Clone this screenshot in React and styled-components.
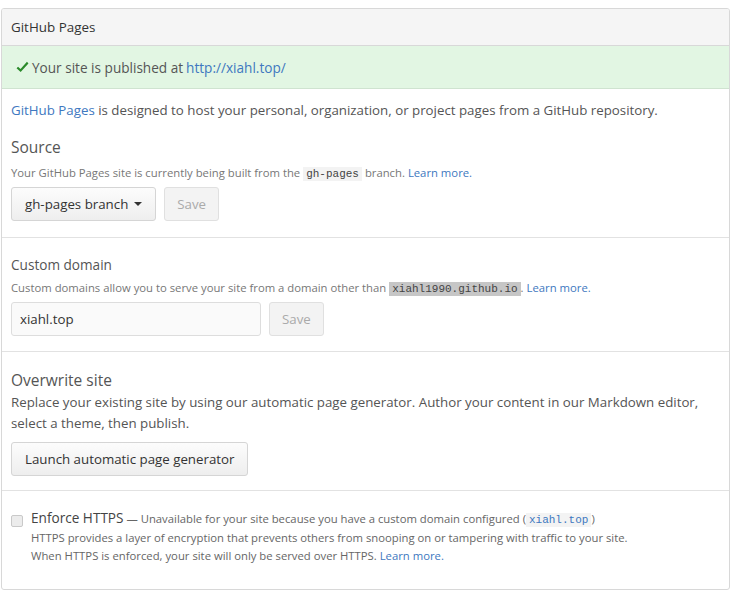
import React from "react";
import styled, { createGlobalStyle } from "styled-components";

const Global = createGlobalStyle`
  body {
    margin: 0;
    background: #fff;
    font-family: "Open Sans", "Noto Sans", sans-serif;
    color: #333;
  }
`;

const Page = styled.div`
  padding: 8px 4px 0 1px;
`;

const Panel = styled.div`
  border: 1px solid #d8d8d8;
  border-radius: 3px;
  width: 729px;
  box-sizing: border-box;
  overflow: hidden;
`;

const Header = styled.div`
  background: #f5f5f5;
  height: 36px;
  display: flex;
  align-items: center;
  padding: 0 9px;
  font-size: 13.4px;
  color: #333;
  border-bottom: 1px solid #d8d8d8;
`;

const Flash = styled.div`
  background: #e2f6e3;
  height: 42px;
  display: flex;
  align-items: center;
  padding: 0 12px 0 14px;
  font-size: 13.6px;
  color: #555;
  border-bottom: 1px solid #cfe3d0;
  gap: 3px;
`;

const Link = styled.a`
  color: #4078c0;
  text-decoration: none;
`;

const Section = styled.div`
  padding: ${(p) => p.$pad || "12px 9px 16px"};
  border-top: ${(p) => (p.$first ? "none" : "1px solid #e2e2e2")};
`;

const Lead = styled.p`
  margin: 0 0 17px;
  font-size: 13.3px;
  color: #555;
`;

const Title = styled.h3`
  margin: 0 0 ${(p) => p.$gap || 4}px;
  font-weight: 400;
  font-size: ${(p) => p.$size || 15.5}px;
  color: #555;
`;

const Note = styled.p`
  margin: 0 0 ${(p) => p.$gap || 7}px;
  font-size: 11.3px;
  color: #777;
`;

const Code = styled.code`
  font-family: "Liberation Mono", monospace;
  font-size: 11px;
  padding: 1px 3px;
  background: ${(p) => (p.$sel ? "#c6c6c6" : "#f3f3f3")};
  color: ${(p) => (p.$blue ? "#4078c0" : "#444")};
`;

const Row = styled.div`
  display: flex;
  align-items: center;
  gap: 8px;
`;

const Button = styled.button`
  font-family: inherit;
  font-size: 13.3px;
  height: 34px;
  padding: 0 ${(p) => (p.disabled ? 12 : 13)}px;
  border: 1px solid #d5d5d5;
  border-radius: 3px;
  background: linear-gradient(#fcfcfc, #eee);
  color: ${(p) => (p.disabled ? "#aaa" : "#333")};
  display: flex;
  align-items: center;
  gap: 6px;
  ${(p) => p.disabled && "background: #f3f3f3; border-color: #e0e0e0;"}
`;

const Caret = styled.span`
  width: 0;
  height: 0;
  border-left: 4px solid transparent;
  border-right: 4px solid transparent;
  border-top: 4px solid #333;
`;

const Input = styled.input`
  font-family: inherit;
  font-size: 13.3px;
  width: 250px;
  height: 34px;
  box-sizing: border-box;
  padding: 0 8px;
  border: 1px solid #ddd;
  border-radius: 3px;
  color: #333;
  background: #fafafa;
`;

const Para = styled.p`
  margin: 0 0 8px;
  font-size: 13.3px;
  line-height: 21px;
  color: #555;
`;

const CheckRow = styled.div`
  display: flex;
  gap: 8px;
`;

const Box = styled.span`
  width: 10px;
  height: 10px;
  margin-top: 6px;
  border: 1px solid #c9c9c9;
  background: #ececec;
  border-radius: 2px;
  flex: none;
`;

const CheckText = styled.div`
  font-size: 11.3px;
  color: #666;
  line-height: 18px;
  strong {
    font-size: 13.6px;
    font-weight: 400;
    color: #444;
  }
`;

export default function App() {
  return (
    <Page>
      <Global />
      <Panel>
        <Header>GitHub Pages</Header>
        <Flash>
          <svg width="13" height="13" viewBox="0 0 12 12">
            <path d="M11.5 2.2L4.3 10.2 0.5 6.6l1.4-1.4 2.3 2.2 5.9-6.6z" fill="#2b8a2b" />
          </svg>
          Your site is published at <Link href="#">http://xiahl.top/</Link>
        </Flash>
        <Section $first $pad="12px 9px 16px">
          <Lead>
            <Link href="#">GitHub Pages</Link> is designed to host your personal, organization, or project pages from a GitHub repository.
          </Lead>
          <Title $gap={7}>Source</Title>
          <Note>
            Your GitHub Pages site is currently being built from the <Code>gh-pages</Code> branch. <Link href="#">Learn more.</Link>
          </Note>
          <Row>
            <Button>
              gh-pages branch <Caret />
            </Button>
            <Button disabled>Save</Button>
          </Row>
        </Section>
        <Section $pad="17px 9px 15px">
          <Title $size={13.6} $gap={6}>Custom domain</Title>
          <Note $gap={7}>
            Custom domains allow you to serve your site from a domain other than <Code $sel>xiahl1990.github.io</Code>. <Link href="#">Learn more.</Link>
          </Note>
          <Row>
            <Input defaultValue="xiahl.top" />
            <Button disabled>Save</Button>
          </Row>
        </Section>
        <Section $pad="17px 9px 14px">
          <Title $gap={1}>Overwrite site</Title>
          <Para>
            Replace your existing site by using our automatic page generator. Author your content in our Markdown editor, select a theme, then publish.
          </Para>
          <Button>Launch automatic page generator</Button>
        </Section>
        <Section $pad="18px 9px 24px">
          <CheckRow>
            <Box />
            <CheckText>
              <strong>Enforce HTTPS</strong> — Unavailable for your site because you have a custom domain configured (<Code $blue>xiahl.top</Code>)
              <br />
              HTTPS provides a layer of encryption that prevents others from snooping on or tampering with traffic to your site.
              <br />
              When HTTPS is enforced, your site will only be served over HTTPS. <Link href="#">Learn more.</Link>
            </CheckText>
          </CheckRow>
        </Section>
      </Panel>
    </Page>
  );
}
